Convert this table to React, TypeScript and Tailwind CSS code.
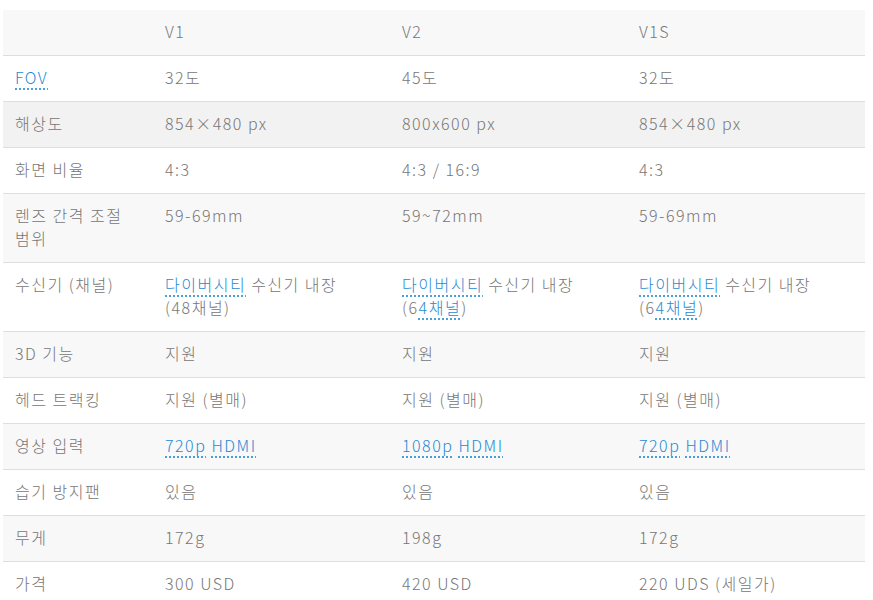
import type { ReactNode } from 'react'

const L = ({ children }: { children: ReactNode }) => (
  <span className="text-[#1f8ad2] underline decoration-dotted decoration-[#1f8ad2] underline-offset-[5px]">
    {children}
  </span>
)

type Row = { label: ReactNode; cells: ReactNode[]; bg: string }

const ROWS: Row[] = [
  { label: <L>FOV</L>, cells: ['32도', '45도', '32도'], bg: 'bg-white' },
  { label: '해상도', cells: ['854×480 px', '800x600 px', '854×480 px'], bg: 'bg-[#f2f2f2]' },
  { label: '화면 비율', cells: ['4:3', '4:3 / 16:9', '4:3'], bg: 'bg-white' },
  { label: '렌즈 간격 조절 범위', cells: ['59-69mm', '59~72mm', '59-69mm'], bg: 'bg-[#f8f8f8]' },
  {
    label: '수신기 (채널)',
    cells: [
      <><L>다이버시티</L> 수신기 내장 (48채널)</>,
      <><L>다이버시티</L> 수신기 내장 (6<L>4채널</L>)</>,
      <><L>다이버시티</L> 수신기 내장 (6<L>4채널</L>)</>,
    ],
    bg: 'bg-white',
  },
  { label: '3D 기능', cells: ['지원', '지원', '지원'], bg: 'bg-[#f8f8f8]' },
  { label: '헤드 트랙킹', cells: ['지원 (별매)', '지원 (별매)', '지원 (별매)'], bg: 'bg-white' },
  {
    label: '영상 입력',
    cells: [
      <><L>720p</L> <L>HDMI</L></>,
      <><L>1080p</L> <L>HDMI</L></>,
      <><L>720p</L> <L>HDMI</L></>,
    ],
    bg: 'bg-[#f8f8f8]',
  },
  { label: '습기 방지팬', cells: ['있음', '있음', '있음'], bg: 'bg-white' },
  { label: '무게', cells: ['172g', '198g', '172g'], bg: 'bg-[#f8f8f8]' },
  { label: '가격', cells: ['300 USD', '420 USD', '220 UDS (세일가)'], bg: 'bg-white' },
]

const cell = 'pl-3 pr-0 pt-[10px] pb-[12px] break-keep'

export default function App() {
  return (
    <div
      className="min-h-[600px] bg-white pl-[3px] pt-[10px] text-[16px] font-light leading-[23px] tracking-[1.5px] text-[#767676]"
      style={{ fontFamily: '"Noto Sans CJK KR", "Noto Sans", sans-serif' }}
    >
      <div className="w-[862px]">
        <div className="grid grid-cols-[150px_237px_237px_238px] border-b border-[#dedede] bg-[#f8f8f8]">
          <div className={cell} />
          <div className={cell}>V1</div>
          <div className={cell}>V2</div>
          <div className={cell}>V1S</div>
        </div>
        {ROWS.map((r, i) => (
          <div
            key={i}
            className={`grid grid-cols-[150px_237px_237px_238px] border-b border-[#dedede] ${r.bg}`}
          >
            <div className={cell}>{r.label}</div>
            {r.cells.map((c, j) => (
              <div key={j} className={cell}>
                {c}
              </div>
            ))}
          </div>
        ))}
      </div>
    </div>
  )
}
